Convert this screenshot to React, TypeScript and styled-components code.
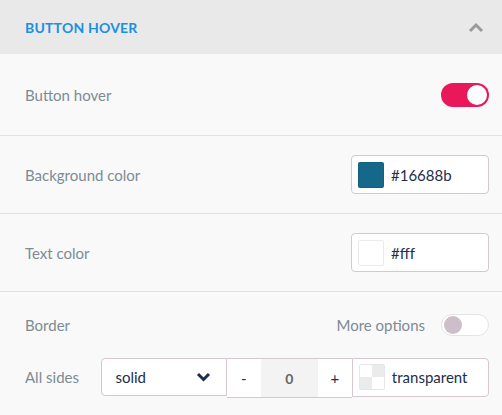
import * as React from 'react';
import styled, { createGlobalStyle } from 'styled-components';

const GlobalStyle = createGlobalStyle`
  html, body {
    margin: 0;
    padding: 0;
    background: #f9f9f9;
  }
  body {
    font-family: Lato, "Open Sans", sans-serif;
  }
`;

const Panel = styled.div`
  width: 502px;
  height: 415px;
  background: #f9f9f9;
  overflow: hidden;
`;

const Header = styled.div`
  height: 54px;
  background: #e9e9e9;
  display: flex;
  align-items: center;
  justify-content: space-between;
  padding: 0 18px 0 25px;
  box-sizing: border-box;
`;

const Title = styled.div`
  color: #1a8fe3;
  font-weight: 700;
  font-size: 14px;
  letter-spacing: 0.2px;
`;

const Row = styled.div<{ $height?: number }>`
  height: ${(p) => p.$height ?? 78}px;
  display: flex;
  align-items: center;
  justify-content: space-between;
  padding: 0 13px 0 25px;
  border-bottom: 1px solid #e1e1e1;
  box-sizing: border-box;
`;

const BorderSection = styled.div`
  padding: 22px 13px 0 25px;
  display: flex;
  flex-direction: column;
  gap: 20px;
`;

const Line = styled.div`
  display: flex;
  align-items: center;
  justify-content: space-between;
`;

const Label = styled.div`
  color: #7d8b94;
  font-size: 15px;
`;

const Options = styled.div`
  display: flex;
  align-items: center;
  gap: 16px;
`;

const Track = styled.div<{ $on: boolean }>`
  width: 48px;
  height: ${(p) => (p.$on ? 24 : 22)}px;
  border-radius: 12px;
  box-sizing: border-box;
  background: ${(p) => (p.$on ? '#e8185a' : '#ffffff')};
  border: ${(p) => (p.$on ? 'none' : '1px solid #e4e4e4')};
  display: flex;
  align-items: center;
  justify-content: ${(p) => (p.$on ? 'flex-end' : 'flex-start')};
  padding: 0 2px;
`;

const Knob = styled.div<{ $on: boolean }>`
  width: ${(p) => (p.$on ? 20 : 18)}px;
  height: ${(p) => (p.$on ? 20 : 18)}px;
  border-radius: 50%;
  background: ${(p) => (p.$on ? '#ffffff' : '#cdbfc9')};
`;

const ColorBox = styled.div<{ $flatLeft?: boolean }>`
  width: 138px;
  height: 39px;
  box-sizing: border-box;
  background: #ffffff;
  border: 1px solid #d8c6d0;
  border-radius: ${(p) => (p.$flatLeft ? '0 4px 4px 0' : '4px')};
  display: flex;
  align-items: center;
  padding: 0 6px;
  gap: 7px;
`;

const Swatch = styled.div<{ $color: string }>`
  width: 26px;
  height: 26px;
  border-radius: 2px;
  box-sizing: border-box;
  border: 1px solid rgba(0, 0, 0, 0.08);
  background: ${(p) => p.$color};
`;

const Checker = styled.div`
  width: 26px;
  height: 26px;
  border-radius: 2px;
  box-sizing: border-box;
  border: 1px solid #e6e6e6;
  background: conic-gradient(#ebebeb 0 25%, #ffffff 0 50%, #ebebeb 0 75%, #ffffff 0);
  background-size: 24px 24px;
  background-position: 0 0;
`;

const Value = styled.span`
  color: #1c2e4a;
  font-size: 15px;
`;

const SidesRow = styled.div`
  display: flex;
  align-items: center;
`;

const SidesLabel = styled(Label)`
  width: 77px;
`;

const Select = styled.div`
  width: 126px;
  height: 38px;
  box-sizing: border-box;
  background: #ffffff;
  border: 1px solid #d8c6d0;
  border-radius: 4px 0 0 4px;
  display: flex;
  align-items: center;
  justify-content: space-between;
  padding: 0 15px 0 13px;
  color: #1c2e4a;
  font-size: 15px;
`;

const Stepper = styled.div`
  display: flex;
  height: 40px;
  box-sizing: border-box;
  border: 1px solid #d8c6d0;
  border-left: none;
  border-right: none;
  margin-top: 2px;
`;

const StepButton = styled.div`
  width: 34px;
  background: #ffffff;
  display: flex;
  align-items: center;
  justify-content: center;
  color: #1c2e4a;
  font-size: 15px;
`;

const StepValue = styled.div`
  width: 57px;
  background: #f3f3f3;
  display: flex;
  align-items: center;
  justify-content: center;
  color: #666;
  font-size: 14px;
  font-weight: 700;
`;

const ChevronUp = () => (
  <svg width="16" height="11" viewBox="0 0 16 11">
    <path d="M2 9 L8 3 L14 9" fill="none" stroke="#9a9a9a" strokeWidth="3" />
  </svg>
);

const ChevronDown = () => (
  <svg width="15" height="10" viewBox="0 0 15 10">
    <path d="M2 2 L7.5 7.5 L13 2" fill="none" stroke="#1c2e4a" strokeWidth="3" />
  </svg>
);

const Toggle = ({ on }: { on: boolean }) => (
  <Track $on={on}>
    <Knob $on={on} />
  </Track>
);

export default function App() {
  return (
    <Panel>
      <GlobalStyle />
      <Header>
        <Title>BUTTON HOVER</Title>
        <ChevronUp />
      </Header>
      <Row $height={82}>
        <Label>Button hover</Label>
        <Toggle on />
      </Row>
      <Row>
        <Label>Background color</Label>
        <ColorBox>
          <Swatch $color="#16688b" />
          <Value>#16688b</Value>
        </ColorBox>
      </Row>
      <Row>
        <Label>Text color</Label>
        <ColorBox>
          <Swatch $color="#ffffff" />
          <Value>#fff</Value>
        </ColorBox>
      </Row>
      <BorderSection>
        <Line>
          <Label>Border</Label>
          <Options>
            <Label>More options</Label>
            <Toggle on={false} />
          </Options>
        </Line>
        <SidesRow>
          <SidesLabel>All sides</SidesLabel>
          <Select>
            solid
            <ChevronDown />
          </Select>
          <Stepper>
            <StepButton>-</StepButton>
            <StepValue>0</StepValue>
            <StepButton>+</StepButton>
          </Stepper>
          <ColorBox $flatLeft>
            <Checker />
            <Value>transparent</Value>
          </ColorBox>
        </SidesRow>
      </BorderSection>
    </Panel>
  );
}
